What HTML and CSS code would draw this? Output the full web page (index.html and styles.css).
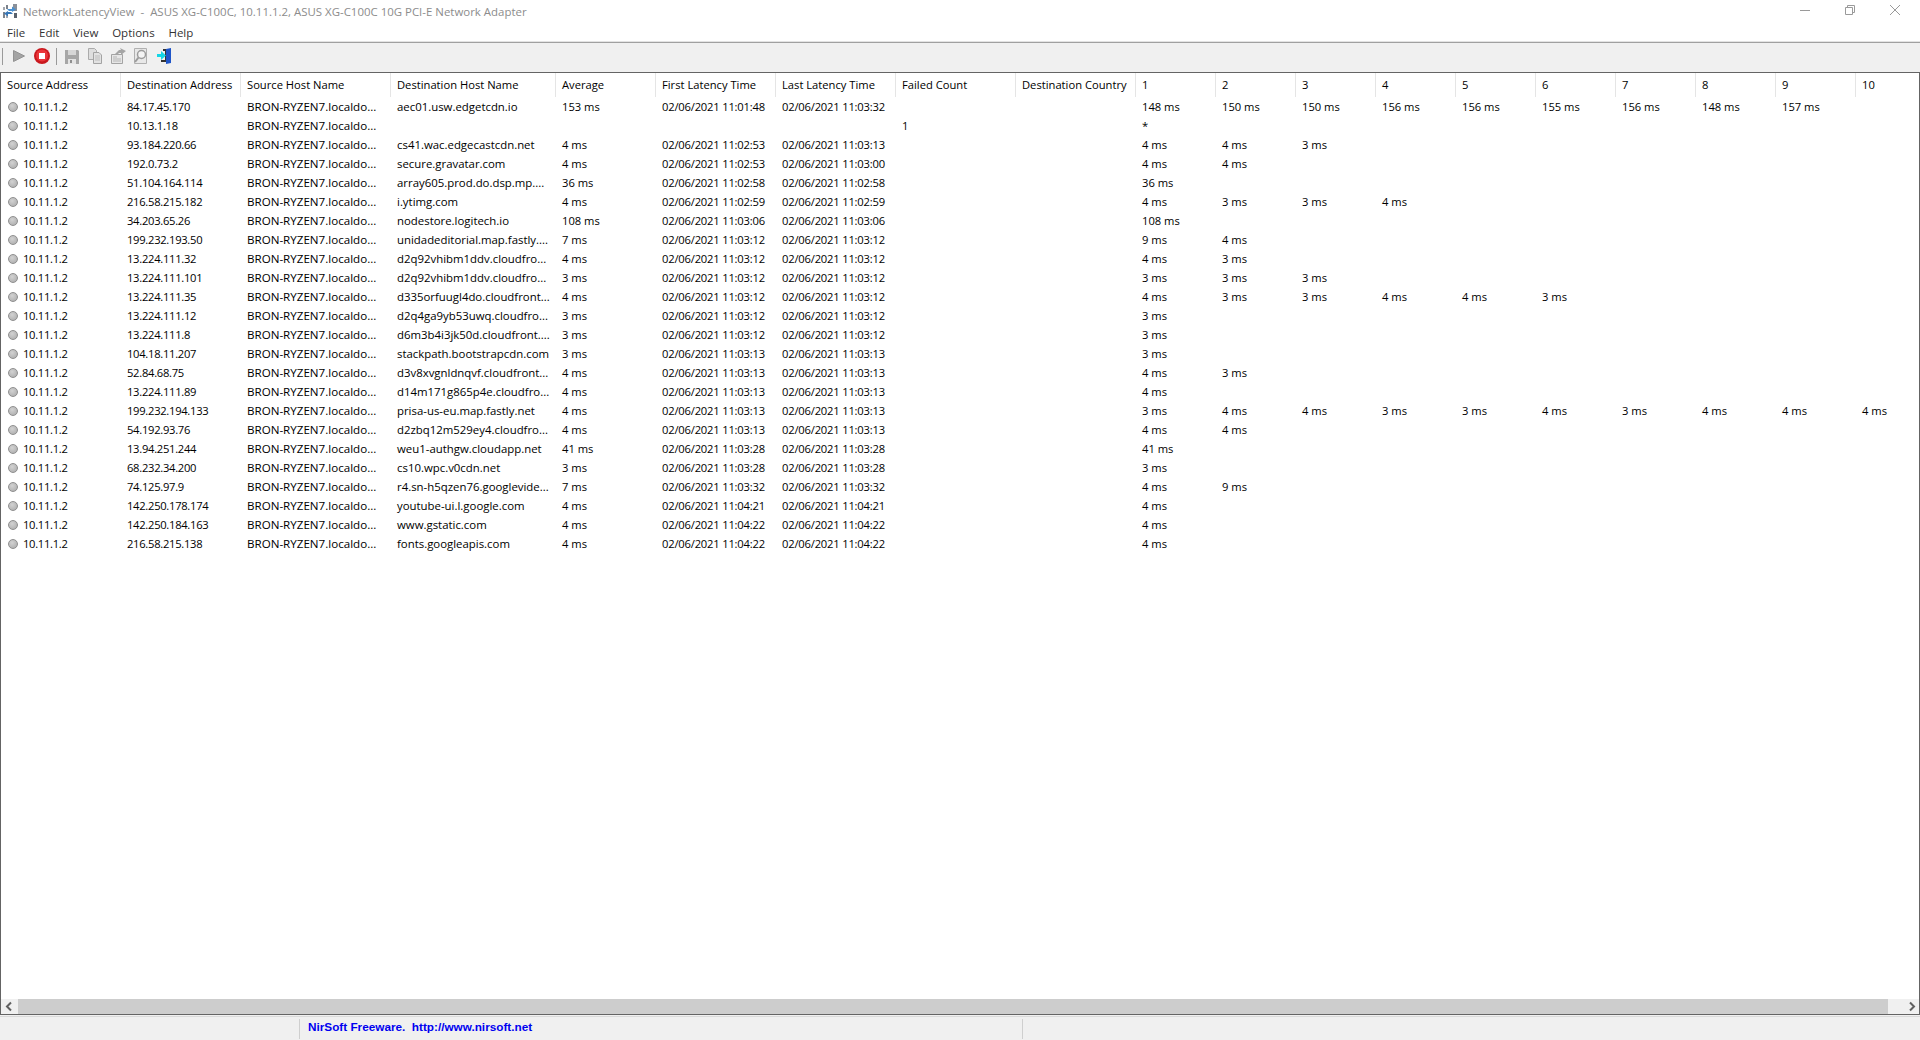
FILE: index.html
```html
<!DOCTYPE html>
<html lang="en">
<head>
<meta charset="utf-8">
<title>NetworkLatencyView</title>
<link rel="stylesheet" href="styles.css">
</head>
<body>
<div class="window">
  <div class="titlebar">
    <svg class="app-icon" width="16" height="16" viewBox="0 0 16 16">
      <rect x="1" y="4" width="2" height="3" fill="#a3a7ae"/><rect x="1" y="9" width="2" height="6" fill="#7b828c"/>
      <rect x="4" y="2" width="2" height="4" fill="#7b828c"/><rect x="4" y="11" width="2" height="4" fill="#a3a7ae"/>
      <rect x="11" y="1" width="4" height="7" fill="#8a9099"/><rect x="12" y="10" width="3" height="5" fill="#59616c"/>
      <path d="M5 6H10V3.500L14 6.500L10 9V8H7Z" fill="#4a90d0"/><path d="M11 11H6V13.500L2 10.500L6 8V9H9Z" fill="#3878b8"/>
    </svg>
    <span class="title">NetworkLatencyView  -  ASUS XG-C100C, 10.11.1.2, ASUS XG-C100C 10G PCI-E Network Adapter</span>
    <div class="caption-btns">
      <svg width="10" height="10" viewBox="0 0 10 10"><path d="M0 5.500H10" stroke="#9a9a9a" fill="none"/></svg>
      <svg width="10" height="10" viewBox="0 0 10 10"><path d="M.5 2.500H7.500V9.500H.5ZM2.500 2.500V.5H9.500V7.500H7.500" stroke="#9a9a9a" fill="none"/></svg>
      <svg width="10" height="10" viewBox="0 0 10 10"><path d="M0 0L10 10M10 0L0 10" stroke="#9a9a9a" fill="none"/></svg>
    </div>
  </div>
  <div class="menubar"><span>File</span><span>Edit</span><span>View</span><span>Options</span><span>Help</span></div>
  <div class="toolbar">
    <i class="tb-sep tb-sep-first"></i>
    <svg class="tb" width="16" height="16" viewBox="0 0 16 16"><path d="M2.500 2.500L13.500 8L2.500 13.500Z" fill="#a3a3a3" stroke="#929292"/></svg>
    <svg class="tb" width="16" height="16" viewBox="0 0 16 16"><circle cx="8" cy="8" r="8" fill="#c9181e"/><circle cx="8" cy="7.500" r="6" fill="#ea3539"/><rect x="5" y="5" width="6" height="6" fill="#fff"/></svg>
    <i class="tb-sep tb-sep-second"></i>
    <svg class="tb" width="16" height="16" viewBox="0 0 16 16"><path d="M1 2H14L15 3V16H1Z" fill="#a6a6a6"/><rect x="4" y="2" width="8" height="5" fill="#d6d6d6"/><rect x="4" y="11" width="8" height="5" fill="#e4e4e4"/><rect x="6" y="12" width="2" height="3" fill="#8f8f8f"/></svg>
    <svg class="tb" width="16" height="16" viewBox="0 0 16 16"><path d="M1.500 .5H7.500L9.500 2.500V11.500H1.500Z" fill="#dedede" stroke="#ababab"/><path d="M6.500 4.500H12L14.500 7V15.500H6.500Z" fill="#e2e2e2" stroke="#a3a3a3"/><path d="M8 8H13M8 10H13M8 12H13" stroke="#bdbdbd"/></svg>
    <svg class="tb" width="16" height="16" viewBox="0 0 16 16"><path d="M1.500 6.500H12.500V15.500H1.500Z" fill="#e6e6e6" stroke="#a3a3a3"/><path d="M3 9H7M3 11H11M3 13H11" stroke="#b5b5b5"/><path d="M5 6L9 2H11L10 0L16 3L11 7L11 5H9L7 7Z" fill="#a5a5a5"/></svg>
    <svg class="tb" width="16" height="16" viewBox="0 0 16 16"><path d="M1.500 .5H13.500V15.500H1.500Z" fill="#e8e8e8" stroke="#b0b0b0"/><circle cx="8.500" cy="6.500" r="4" fill="#f4f4f4" stroke="#9c9c9c" stroke-width="1.500"/><path d="M5.500 9.500L2 14" stroke="#9c9c9c" stroke-width="2"/></svg>
    <svg class="tb" width="16" height="16" viewBox="0 0 16 16"><path d="M10 1L15 0V15L10 16Z" fill="#1f55c8"/><path d="M7 1H10V14H7V12H9V3H7Z" fill="#333"/><rect x="5" y="12" width="4" height="2" fill="#333"/><path d="M1 6H5V3L10 7.500L5 12V9H1Z" fill="#14d6e6"/></svg>
  </div>
  <div class="list">
    <div class="viewport">
      <div class="row header"><span>Source Address</span><span>Destination Address</span><span>Source Host Name</span><span>Destination Host Name</span><span>Average</span><span>First Latency Time</span><span>Last Latency Time</span><span>Failed Count</span><span>Destination Country</span><span>1</span><span>2</span><span>3</span><span>4</span><span>5</span><span>6</span><span>7</span><span>8</span><span>9</span><span>10</span></div>
      <div id="rows"></div>
    </div>
    <div class="hscroll">
      <svg class="arrow" width="17" height="15" viewBox="0 0 17 15"><path d="M10 3.500L6 7.500L10 11.500" stroke="#606060" stroke-width="2" fill="none"/></svg>
      <div class="thumb"></div>
      <svg class="arrow" width="31" height="15" viewBox="0 0 31 15"><path d="M22 3.500L26 7.500L22 11.500" stroke="#606060" stroke-width="2" fill="none"/></svg>
    </div>
  </div>
  <div class="statusbar">
    <div class="status-empty"></div>
    <div class="status-link">NirSoft Freeware.  http://www.nirsoft.net</div>
    <div class="status-rest"></div>
  </div>
</div>
<script src="app.js"></script>
</body>
</html>
```

FILE: styles.css
```css
* { box-sizing: border-box; }
html, body { margin: 0; height: 100%; overflow: hidden; }
.window {
  width: 1920px; height: 1040px; display: flex; flex-direction: column;
  background: #fff; font-family: "Open Sans", "Liberation Sans", sans-serif; font-size: 11.2px; color: #000;
}
.titlebar { height: 22px; display: flex; align-items: center; padding-left: 2px; flex: none; }
.app-icon { flex: none; }
.title { margin-left: 5px; padding-top: 1px; color: #8c8c8c; white-space: pre; font-size: 11.45px; }
.caption-btns { margin-left: auto; display: flex; gap: 35px; padding-right: 20px; padding-bottom: 2px; }
.menubar { height: 19px; display: flex; gap: 13.8px; padding: 2px 0 0 7px; align-items: center; flex: none; color: #333; font-size: 11.5px; }
.toolbar {
  height: 31px; flex: none; display: flex; align-items: center; gap: 7px; padding: 0 0 2px 2px;
  background: #f0f0f0; border-top: 1px solid #e3e3e3; box-shadow: inset 0 1px 0 #a0a0a0;
}
.tb-sep { width: 1px; height: 17px; background: #9a9a9a; flex: none; }
.tb-sep-first { margin-right: 1px; }
.tb-sep-second { margin-left: -1px; }
.tb { flex: none; }
.list {
  flex: 1; min-height: 0; display: flex; flex-direction: column;
  border: 1px solid #646464; background: #fff;
}
.viewport { flex: 1; min-height: 0; overflow: hidden; }
.row {
  display: grid; height: 19px; align-items: center; white-space: pre;
  grid-template-columns: 120px 120px 150px 165px 100px 120px 120px 120px 120px 80px 80px 80px 80px 80px 80px 80px 80px 80px 80px;
}
.row > span { padding-left: 6px; overflow: hidden; }
.header { height: 24px; }
.header > span { line-height: 24px; box-shadow: inset -1px 0 0 #e5e5e5; }
.header > span:last-child { box-shadow: none; }
.row > .cell-src { display: flex; align-items: center; gap: 5px; padding-left: 7px; letter-spacing: -0.3px; }
.dot {
  width: 10px; height: 10px; border-radius: 50%; flex: none; border: 1px solid #8f8f8f;
  background: radial-gradient(circle at 40% 35%, #d2d2d2, #a9a9a9);
}
.cell-addr { letter-spacing: -0.28px; }
.cell-srchost { font-size: 11.6px; }
.cell-dsthost { font-size: 11.4px; }
.cell-time { letter-spacing: -0.19px; }
.hscroll { height: 15px; flex: none; display: flex; align-items: center; background: #f0f0f0; }
.arrow { flex: none; }
.thumb { flex: 1; height: 100%; background: #cdcdcd; }
.statusbar {
  height: 25px; flex: none; display: flex; background: #f0f0f0; border-top: 1px solid #f0f0f0;
  box-shadow: inset 0 1px 0 #d9d9d9; align-items: stretch;
}
.status-empty { width: 299px; }
.status-link {
  width: 724px; margin: 3px 0 1px; border-left: 1px solid #cfcfcf; border-right: 1px solid #cfcfcf;
  padding-left: 8px; line-height: 16px; color: #0000f0; font-family: "Liberation Sans", sans-serif; font-weight: 700; font-size: 11.75px; white-space: pre;
}
.status-rest { flex: 1; }
```

FILE: app.js
```js
var H = [
["84.17.45.170","aec01.usw.edgetcdn.io","153 ms","11:01:48","11:03:32","",["148 ms","150 ms","150 ms","156 ms","156 ms","155 ms","156 ms","148 ms","157 ms"]],
["10.13.1.18","","","","","1",["*"]],
["93.184.220.66","cs41.wac.edgecastcdn.net","4 ms","11:02:53","11:03:13","",["4 ms","4 ms","3 ms"]],
["192.0.73.2","secure.gravatar.com","4 ms","11:02:53","11:03:00","",["4 ms","4 ms"]],
["51.104.164.114","array605.prod.do.dsp.mp....","36 ms","11:02:58","11:02:58","",["36 ms"]],
["216.58.215.182","i.ytimg.com","4 ms","11:02:59","11:02:59","",["4 ms","3 ms","3 ms","4 ms"]],
["34.203.65.26","nodestore.logitech.io","108 ms","11:03:06","11:03:06","",["108 ms"]],
["199.232.193.50","unidadeditorial.map.fastly....","7 ms","11:03:12","11:03:12","",["9 ms","4 ms"]],
["13.224.111.32","d2q92vhibm1ddv.cloudfro...","4 ms","11:03:12","11:03:12","",["4 ms","3 ms"]],
["13.224.111.101","d2q92vhibm1ddv.cloudfro...","3 ms","11:03:12","11:03:12","",["3 ms","3 ms","3 ms"]],
["13.224.111.35","d335orfuugl4do.cloudfront...","4 ms","11:03:12","11:03:12","",["4 ms","3 ms","3 ms","4 ms","4 ms","3 ms"]],
["13.224.111.12","d2q4ga9yb53uwq.cloudfro...","3 ms","11:03:12","11:03:12","",["3 ms"]],
["13.224.111.8","d6m3b4i3jk50d.cloudfront....","3 ms","11:03:12","11:03:12","",["3 ms"]],
["104.18.11.207","stackpath.bootstrapcdn.com","3 ms","11:03:13","11:03:13","",["3 ms"]],
["52.84.68.75","d3v8xvgnldnqvf.cloudfront...","4 ms","11:03:13","11:03:13","",["4 ms","3 ms"]],
["13.224.111.89","d14m171g865p4e.cloudfro...","4 ms","11:03:13","11:03:13","",["4 ms"]],
["199.232.194.133","prisa-us-eu.map.fastly.net","4 ms","11:03:13","11:03:13","",["3 ms","4 ms","4 ms","3 ms","3 ms","4 ms","3 ms","4 ms","4 ms","4 ms"]],
["54.192.93.76","d2zbq12m529ey4.cloudfro...","4 ms","11:03:13","11:03:13","",["4 ms","4 ms"]],
["13.94.251.244","weu1-authgw.cloudapp.net","41 ms","11:03:28","11:03:28","",["41 ms"]],
["68.232.34.200","cs10.wpc.v0cdn.net","3 ms","11:03:28","11:03:28","",["3 ms"]],
["74.125.97.9","r4.sn-h5qzen76.googlevide...","7 ms","11:03:32","11:03:32","",["4 ms","9 ms"]],
["142.250.178.174","youtube-ui.l.google.com","4 ms","11:04:21","11:04:21","",["4 ms"]],
["142.250.184.163","www.gstatic.com","4 ms","11:04:22","11:04:22","",["4 ms"]],
["216.58.215.138","fonts.googleapis.com","4 ms","11:04:22","11:04:22","",["4 ms"]]
];
var out = "";
H.forEach(function (r) {
  var d = "02/06/2021 ";
  var html = '<div class="row"><span class="cell-src"><i class="dot"></i>10.11.1.2</span>' +
    '<span class="cell-addr">' + r[0] + "</span>" +
    '<span class="cell-srchost">BRON-RYZEN7.localdo...</span>' +
    '<span class="cell-dsthost">' + r[1] + "</span>" +
    "<span>" + r[2] + "</span>" +
    '<span class="cell-time">' + (r[3] ? d + r[3] : "") + "</span>" +
    '<span class="cell-time">' + (r[4] ? d + r[4] : "") + "</span>" +
    "<span>" + r[5] + "</span><span></span>";
  for (var i = 0; i < 10; i++) html += "<span>" + (r[6][i] || "") + "</span>";
  out += html + "</div>";
});
document.getElementById("rows").innerHTML = out;
```
